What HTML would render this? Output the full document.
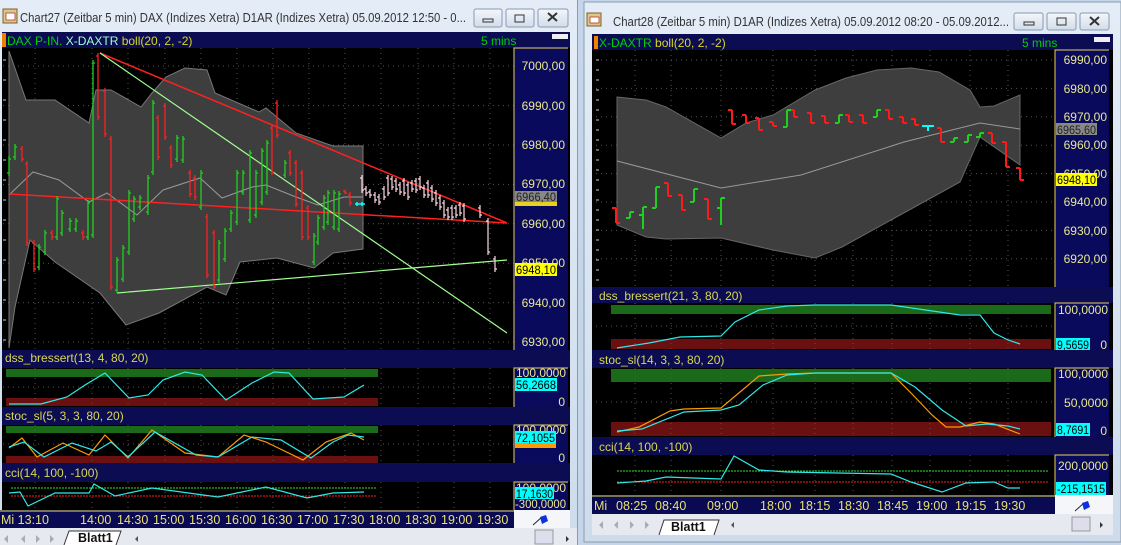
<!DOCTYPE html>
<html><head><meta charset="utf-8"><style>
html,body{margin:0;padding:0;width:1121px;height:545px;overflow:hidden;background:#c6d6ea}
svg{display:block;font-family:"Liberation Sans",sans-serif}
</style></head><body>
<svg width="1121" height="545" viewBox="0 0 1121 545" xmlns="http://www.w3.org/2000/svg">
<defs>
<linearGradient id="tb" x1="0" y1="0" x2="0" y2="1"><stop offset="0" stop-color="#e4edf7"/><stop offset="1" stop-color="#cddbeb"/></linearGradient>
<linearGradient id="btn" x1="0" y1="0" x2="0" y2="1"><stop offset="0" stop-color="#f4f7fb"/><stop offset="1" stop-color="#d2dcea"/></linearGradient>
</defs>
<!-- LEFT WINDOW -->
<rect x="0" y="0" width="578" height="545" fill="url(#tb)"/>
<rect x="577" y="0" width="1" height="545" fill="#8a9bb0"/>
<rect x="3" y="9" width="14" height="14" fill="#d8c890" stroke="#806020"/><rect x="6" y="13" width="9" height="7" fill="#fff" stroke="#c03030" stroke-width="0.8"/>
<text x="20" y="22" font-size="12.5" fill="#333" textLength="446" lengthAdjust="spacingAndGlyphs">Chart27 (Zeitbar 5 min)  DAX (Indizes Xetra) D1AR (Indizes Xetra) 05.09.2012 12:50 - 0...</text>
<g stroke="#8a9ab0" fill="url(#btn)"><rect x="474" y="9" width="28" height="18" rx="2"/><rect x="506" y="9" width="28" height="18" rx="2"/><rect x="538" y="9" width="30" height="18" rx="2"/></g>
<rect x="483" y="19" width="10" height="3" fill="none" stroke="#333"/><rect x="515" y="15" width="9" height="7" fill="none" stroke="#333"/>
<path d="M548 13l9 8M557 13l-9 8" stroke="#333" stroke-width="2"/>
<!-- content -->
<rect x="2" y="32" width="568" height="478" fill="#000"/>
<rect x="2" y="32" width="568" height="16" fill="#0c0c52"/>
<rect x="2" y="33" width="4" height="14" fill="#f08000"/>
<text x="7" y="45" font-size="12" fill="#00d000">DAX P-IN. <tspan fill="#a0ffd0">X-DAXTR</tspan> <tspan fill="#d8d820">boll(20, 2, -2)</tspan></text>
<text x="481" y="45" font-size="12" fill="#00d000">5 mins</text>
<rect x="552" y="34" width="16" height="5" fill="#eee"/>
<g stroke="#555" stroke-dasharray="1,4" stroke-width="1">
<path d="M3 66H514M3 105.6H514M3 145H514M3 184.4H514M3 223.8H514M3 263.2H514M3 302.6H514M3 342H514"/>
<path d="M35 48V350M92 48V350M128 48V350M165 48V350M201 48V350M237 48V350M273 48V350M309 48V350M345 48V350M381 48V350M418 48V350M454 48V350M490 48V350"/>
</g>
<path d="M9 51L26 100L55 100L89 123L96 90L111 90L141 107L152 93L166 77L185 68L207 70L215 93L259 112L266 108L296 133L333 146L363 146L363 249L333 253L314 268L277 258L240 262L226 295L207 287L159 313L126 325L100 293L55 262L30 240L15 307L9 348Z" fill="#3e3e3e" stroke="#777"/>
<path d="M9 195L33 172L59 180L89 202L107 193L137 215L163 190L200 178L222 198L252 187L266 185L296 197L318 205L344 197L363 197" fill="none" stroke="#999"/>
<path d="M100 53L507 223M9 194L507 223" stroke="#ff2020" stroke-width="1.5" fill="none"/>
<path d="M100 53L507 333M117 293L507 260" stroke="#a0ff90" stroke-width="1.2" fill="none"/>
<path stroke="#20d020" stroke-width="1.3" fill="none" d="M9 156V176M7 173h2M9 159h2M15 144V160M13 157h2M15 147h2M39 244V270M37 267h2M39 247h2M45 230V255M43 252h2M45 233h2M57 196V240M55 237h2M57 199h2M62 210V236M60 233h2M62 213h2M70 218V232M68 229h2M70 221h2M76 218V232M74 229h2M76 221h2M88 200V240M86 237h2M88 203h2M93 60V238M91 235h2M93 63h2M117 257V293M115 290h2M117 260h2M123 245V282M121 279h2M123 248h2M129 190V255M127 252h2M129 193h2M134 196V222M132 219h2M134 199h2M140 195V210M138 207h2M140 198h2M148 175V215M146 212h2M148 178h2M153 100V175M151 172h2M153 103h2M177 135V162M175 159h2M177 138h2M183 136V163M181 160h2M183 139h2M201 170V210M199 207h2M201 173h2M219 240V283M217 280h2M219 243h2M225 228V262M223 259h2M225 231h2M231 210V232M229 229h2M231 213h2M237 170V225M235 222h2M237 173h2M243 170V195M241 192h2M243 173h2M250 150V223M248 220h2M250 153h2M256 170V218M254 215h2M256 173h2M262 148V205M260 202h2M262 151h2M267 140V195M265 192h2M267 143h2M285 160V178M283 175h2M285 163h2M314 233V265M312 262h2M314 236h2M318 215V245M316 242h2M318 218h2M324 195V230M322 227h2M324 198h2M328 190V225M326 222h2M328 193h2M334 190V230M332 227h2M334 193h2M339 191V232M337 229h2M339 194h2"/>
<path stroke="#ff2020" stroke-width="1.3" fill="none" d="M22 146V162M20 149h2M22 159h2M27 161V246M25 164h2M27 243h2M34 240V272M32 243h2M34 269h2M52 230V240M50 233h2M52 237h2M83 230V240M81 233h2M83 237h2M98 53V120M96 56h2M98 117h2M105 88V137M103 91h2M105 134h2M111 136V290M109 139h2M111 287h2M158 115V160M156 118h2M158 157h2M165 103V140M163 106h2M165 137h2M171 145V168M169 148h2M171 165h2M190 170V197M188 173h2M190 194h2M195 175V200M193 178h2M195 197h2M207 214V278M205 217h2M207 275h2M214 230V290M212 233h2M214 287h2M272 125V175M270 128h2M272 172h2M277 100V138M275 103h2M277 135h2M290 150V176M288 153h2M290 173h2M296 160V207M294 163h2M296 204h2M302 170V240M300 173h2M302 237h2M308 205V240M306 208h2M308 237h2M345 190V194M343 191h2M345 193h2M350 192V206M348 195h2M350 203h2"/>
<path stroke="#00ffff" stroke-width="1.5" d="M355 204h10M357 202v4M362 202v4"/>
<path stroke="#ffd8e4" stroke-width="1.2" fill="none" d="M362 175V193M360 178h2M362 190h2M366 186V196M364 189h2M366 193h2M370 189V198M368 192h2M370 195h2M375 192V203M373 195h2M375 200h2M379 194V205M377 197h2M379 202h2M384 186V200M382 189h2M384 197h2M388 175V196M386 178h2M388 193h2M392 176V190M390 179h2M392 187h2M396 178V192M394 181h2M396 189h2M400 182V195M398 185h2M400 192h2M404 178V196M402 181h2M404 193h2M408 182V200M406 185h2M408 197h2M412 180V192M410 183h2M412 189h2M416 178V193M414 181h2M416 190h2M420 176V190M418 179h2M420 187h2M424 185V198M422 188h2M424 195h2M428 180V198M426 183h2M428 195h2M432 185V202M430 188h2M432 199h2M436 190V206M434 193h2M436 203h2M440 195V210M438 198h2M440 207h2M444 200V218M442 203h2M444 215h2M448 207V220M446 210h2M448 217h2M452 205V220M450 208h2M452 217h2M456 205V218M454 208h2M456 215h2M460 202V216M458 205h2M460 213h2M464 203V222M462 206h2M464 219h2M480 205V218M478 208h2M480 215h2M488 218V255M486 221h2M488 252h2M495 256V272M493 259h2M495 269h2"/>
<path d="M3 60h3M3 80h3M3 100h3M3 120h3M3 140h3M3 160h3M3 180h3M3 200h3M3 220h3M3 240h3M3 260h3M3 280h3M3 300h3M3 320h3M3 340h3" stroke="#ccc"/>
<rect x="514" y="48" width="54" height="302" fill="#0a0a5c"/>
<path d="M514 350V48H568" stroke="#e8d060" fill="none"/>
<g font-size="12" fill="#e8e890" text-anchor="end">
<text x="565" y="70">7000,00</text><text x="565" y="110">6990,00</text><text x="565" y="149">6980,00</text><text x="565" y="188">6970,00</text><text x="565" y="228">6960,00</text><text x="565" y="267">6950,00</text><text x="565" y="307">6940,00</text><text x="565" y="346">6930,00</text>
</g>
<rect x="515" y="194" width="42" height="12" fill="#e8d020"/>
<rect x="515" y="191" width="42" height="11" fill="#888"/><text x="516" y="201" font-size="12" fill="#222" textLength="40" lengthAdjust="spacingAndGlyphs">6966,40</text>
<rect x="515" y="263" width="42" height="13" fill="#ffff00"/><text x="516" y="274" font-size="12" fill="#000" textLength="40" lengthAdjust="spacingAndGlyphs">6948,10</text>
<!-- dss left -->
<rect x="2" y="350" width="568" height="18" fill="#0c0c52"/>
<text x="5" y="362" font-size="12" fill="#d8d850">dss_bressert(13, 4, 80, 20)</text>
<rect x="6" y="369" width="372" height="8" fill="#1a6a1a"/><rect x="6" y="398" width="372" height="8" fill="#6a1010"/>
<g stroke="#555" stroke-dasharray="1,4"><path d="M35 368V407M92 368V407M128 368V407M165 368V407M201 368V407M237 368V407M273 368V407M309 368V407M345 368V407M381 368V407M418 368V407M454 368V407M490 368V407M3 387H514"/></g>
<path d="M9 404L41 404L67 397L85 385L105 373L129 398L148 395L163 380L185 372L202 375L226 400L252 383L274 372L289 373L313 399L344 397L364 385" stroke="#30e8e8" fill="none" stroke-width="1.2"/>
<rect x="514" y="368" width="54" height="39" fill="#0a0a5c"/><path d="M514 407V368H568" stroke="#e8d060" fill="none"/>
<text x="566" y="377" font-size="12" fill="#e8e890" text-anchor="end" textLength="50" lengthAdjust="spacingAndGlyphs">100,0000</text>
<rect x="515" y="378" width="42" height="13" fill="#00ffff"/><text x="516" y="389" font-size="12" fill="#000" textLength="40" lengthAdjust="spacingAndGlyphs">56,2668</text>
<text x="565" y="406" font-size="12" fill="#e8e890" text-anchor="end">0</text>
<!-- stoc left -->
<rect x="2" y="407" width="568" height="18" fill="#0c0c52"/>
<text x="5" y="420" font-size="12" fill="#d8d850">stoc_sl(5, 3, 3, 80, 20)</text>
<rect x="6" y="426" width="372" height="7" fill="#1a6a1a"/><rect x="6" y="456" width="372" height="7" fill="#6a1010"/>
<g stroke="#555" stroke-dasharray="1,4"><path d="M35 425V463M92 425V463M128 425V463M165 425V463M201 425V463M237 425V463M273 425V463M309 425V463M345 425V463M381 425V463M418 425V463M454 425V463M490 425V463M3 444H514"/></g>
<path d="M9 448L22 438L37 457L63 443L89 455L105 435L128 458L152 430L185 453L218 457L244 435L266 442L303 460L326 442L351 433L364 440" stroke="#ff9a00" fill="none" stroke-width="1.2"/>
<path d="M9 447L24 442L44 457L72 443L96 451L111 442L128 457L155 432L196 455L218 457L252 437L281 440L311 458L333 442L348 435L364 437" stroke="#30e8e8" fill="none" stroke-width="1.2"/>
<rect x="514" y="425" width="54" height="38" fill="#0a0a5c"/><path d="M514 463V425H568" stroke="#e8d060" fill="none"/>
<text x="566" y="434" font-size="12" fill="#e8e890" text-anchor="end" textLength="50" lengthAdjust="spacingAndGlyphs">100,0000</text>
<rect x="515" y="441" width="41" height="7" fill="#ff9a00"/>
<rect x="515" y="431" width="41" height="12" fill="#00ffff"/><text x="516" y="442" font-size="12" fill="#000" textLength="39" lengthAdjust="spacingAndGlyphs">72,1055</text>
<text x="565" y="462" font-size="12" fill="#e8e890" text-anchor="end">0</text>
<!-- cci left -->
<rect x="2" y="463" width="568" height="19" fill="#0c0c52"/>
<text x="5" y="477" font-size="12" fill="#d8d850">cci(14, 100, -100)</text>
<g stroke="#555" stroke-dasharray="1,4"><path d="M35 482V509M92 482V509M128 482V509M165 482V509M201 482V509M237 482V509M273 482V509M309 482V509M345 482V509M381 482V509M418 482V509M454 482V509M490 482V509"/></g>
<path d="M11 488H377" stroke="#30e030" stroke-dasharray="2,1"/><path d="M11 496H377" stroke="#ff2020" stroke-dasharray="2,1"/>
<path d="M9 493L20 492L28 506L55 493L89 493L94 484L115 496L152 488L218 497L266 487L307 498L333 493L364 492" stroke="#30e8e8" fill="none" stroke-width="1.2"/>
<rect x="514" y="482" width="54" height="28" fill="#0a0a5c"/><path d="M514 510V482H568" stroke="#e8d060" fill="none"/>
<text x="566" y="492" font-size="12" fill="#e8e890" text-anchor="end" textLength="50" lengthAdjust="spacingAndGlyphs">100,0000</text>
<text x="566" y="508" font-size="12" fill="#e8e890" text-anchor="end" textLength="51" lengthAdjust="spacingAndGlyphs">-300,0000</text>
<rect x="515" y="487" width="39" height="12" fill="#00ffff"/><text x="516" y="498" font-size="12" fill="#000" textLength="37" lengthAdjust="spacingAndGlyphs">17,1630</text>
<rect x="0" y="510" width="514" height="18" fill="#0a0a52"/>
<path d="M0 511H514" stroke="#e8e060"/>
<rect x="514" y="510" width="56" height="18" fill="#f4f6fa"/>
<path d="M533 525l9-8" stroke="#223"/><path d="M540 517l6-2 2 6-6 3z" fill="#1030e0"/>
<g font-size="12.5" fill="#e8e070"><text x="1" y="524">Mi  13:10</text><text x="80" y="524">14:00</text><text x="117" y="524">14:30</text><text x="153" y="524">15:00</text><text x="189" y="524">15:30</text><text x="225" y="524">16:00</text><text x="261" y="524">16:30</text><text x="297" y="524">17:00</text><text x="333" y="524">17:30</text><text x="369" y="524">18:00</text><text x="405" y="524">18:30</text><text x="441" y="524">19:00</text><text x="477" y="524">19:30</text></g>
<rect x="0" y="528" width="577" height="17" fill="#e6eaf0"/>
<g fill="#aab"><path d="M8 535l-4 4 4 4zM25 535l-4 4 4 4zM36 535l4 4-4 4zM50 535l4 4-4 4z"/></g>
<path d="M64 545l5-14h52l-5 14" fill="#fff" stroke="#333"/>
<text x="78" y="542" font-size="12.5" font-weight="bold" fill="#111">Blatt1</text>
<path d="M138 536l-3 3 3 3" fill="#555"/>
<rect x="535" y="530" width="18" height="14" fill="#dde" stroke="#999"/><path d="M566 536l3 3-3 3z" fill="#333"/>

<!-- RIGHT WINDOW -->
<rect x="584" y="2" width="537" height="540" fill="url(#tb)" stroke="#8a9bb0"/>
<rect x="587" y="13" width="14" height="13" fill="#d8c890" stroke="#806020"/><rect x="590" y="17" width="9" height="6" fill="#fff" stroke="#c03030" stroke-width="0.8"/>
<text x="613" y="26" font-size="12.5" fill="#333" textLength="396" lengthAdjust="spacingAndGlyphs">Chart28 (Zeitbar 5 min)  D1AR (Indizes Xetra) 05.09.2012 08:20 - 05.09.2012...</text>
<g stroke="#8a9ab0" fill="url(#btn)"><rect x="1014" y="13" width="29" height="17" rx="2"/><rect x="1047" y="13" width="29" height="17" rx="2"/><rect x="1080" y="13" width="29" height="17" rx="2"/></g>
<rect x="1024" y="22" width="10" height="3" fill="none" stroke="#333"/><rect x="1057" y="18" width="9" height="7" fill="none" stroke="#333"/>
<path d="M1090 17l9 8M1099 17l-9 8" stroke="#333" stroke-width="2"/>
<rect x="592" y="34" width="521" height="462" fill="#000"/>
<rect x="592" y="34" width="521" height="16" fill="#0c0c52"/>
<rect x="594" y="36" width="4" height="13" fill="#f08000"/>
<text x="599" y="47" font-size="12" fill="#00d000">X-DAXTR <tspan fill="#d8d820">boll(20, 2, -2)</tspan></text>
<text x="1022" y="47" font-size="12" fill="#00d000">5 mins</text>
<rect x="1094" y="37" width="16" height="5" fill="#eee"/>
<g stroke="#555" stroke-dasharray="1,4">
<path d="M596 60H1055M596 88.4H1055M596 116.8H1055M596 145.2H1055M596 173.6H1055M596 202H1055M596 230.4H1055M596 258.8H1055"/>
<path d="M635 50V287M671 50V287M721 50V287M773 50V287M815 50V287M853 50V287M892 50V287M930 50V287M970 50V287M1008 50V287"/>
</g>
<path d="M617 97L646 100L666 107L721 138L746 123L773 115L815 90L846 78L877 70L911 68L939 72L970 90L980 107L994 106L1020 95L1020 165L980 137L960 182L891 220L842 247L815 258L773 250L721 238L666 239L646 237L617 225Z" fill="#3e3e3e" stroke="#666"/>
<path d="M617 161L721 188L801 175L904 142L980 123L1020 129" fill="none" stroke="#999"/>
<path stroke="#ff1a1a" stroke-width="2" fill="none" d="M616 208V223M612 208h4M616 223h4M668 183V196M664 183h4M668 196h4M682 195V210M678 195h4M682 210h4M708 199V219M704 199h4M708 219h4M732 110V124M728 110h4M732 124h4M746 115V123M742 115h4M746 123h4M759 118V130M755 118h4M759 130h4M773 122V126M769 122h4M773 126h4M794 110V117M790 110h4M794 117h4M811 113V123M807 113h4M811 123h4M825 116V123M821 116h4M825 123h4M849 115V122M845 115h4M849 122h4M863 115V123M859 115h4M863 123h4M889 110V119M885 110h4M889 119h4M903 117V123M899 117h4M903 123h4M915 119V125M911 119h4M915 125h4M941 128V142M937 128h4M941 142h4M992 133V143M988 133h4M992 143h4M1006 142V167M1002 142h4M1006 167h4M1020 168V180M1016 168h4M1020 180h4"/>
<path stroke="#20d020" stroke-width="2" fill="none" d="M630 212V218M626 218h4M630 212h4M643 207V229M639 215h4M643 207h4M656 187V208M652 208h4M656 187h4M694 189V202M690 202h4M694 189h4M721 198V225M717 208h4M721 198h4M787 110V127M783 127h4M787 110h4M839 115V123M835 123h4M839 115h4M877 110V117M873 117h4M877 110h4M954 138V142M950 142h4M954 138h4M968 135V142M964 142h4M968 135h4M980 133V137M976 137h4M980 133h4"/>
<path stroke="#00ffff" stroke-width="2" d="M922 126h12M928 126v5"/>
<path d="M596 60h3M596 70h3M596 80h3M596 90h3M596 100h3M596 110h3M596 120h3M596 130h3M596 140h3M596 150h3M596 160h3M596 170h3M596 180h3M596 190h3M596 200h3M596 210h3M596 220h3M596 230h3M596 240h3M596 250h3M596 260h3M596 270h3M596 280h3" stroke="#ccc"/>
<rect x="1055" y="50" width="54" height="237" fill="#0a0a5c"/>
<path d="M1055 287V50H1109" stroke="#e8d060" fill="none"/>
<g font-size="12" fill="#e8e890" text-anchor="end">
<text x="1107" y="64">6990,00</text><text x="1107" y="93">6980,00</text><text x="1107" y="121">6970,00</text><text x="1107" y="149">6960,00</text><text x="1107" y="178">6950,00</text><text x="1107" y="206">6940,00</text><text x="1107" y="235">6930,00</text><text x="1107" y="263">6920,00</text>
</g>
<rect x="1056" y="123" width="41" height="12" fill="#888"/><text x="1057" y="134" font-size="12" fill="#222" textLength="39" lengthAdjust="spacingAndGlyphs">6965,60</text>
<rect x="1056" y="173" width="41" height="13" fill="#ffff00"/><text x="1057" y="184" font-size="12" fill="#000" textLength="39" lengthAdjust="spacingAndGlyphs">6948,10</text>
<!-- dss right -->
<rect x="592" y="287" width="521" height="16" fill="#0c0c52"/>
<text x="599" y="300" font-size="12" fill="#d8d850">dss_bressert(21, 3, 80, 20)</text>
<rect x="611" y="305" width="440" height="9" fill="#1a6a1a"/><rect x="611" y="339" width="440" height="10" fill="#6a1010"/>
<g stroke="#555" stroke-dasharray="1,4"><path d="M635 303V350M671 303V350M721 303V350M773 303V350M815 303V350M853 303V350M892 303V350M930 303V350M970 303V350M1008 303V350M596 326H1055"/></g>
<path d="M617 348L649 343L680 337L721 336L735 322L759 310L787 306L815 305L891 305L960 315L980 315L994 333L1008 340L1020 344" stroke="#30e8e8" fill="none" stroke-width="1.2"/>
<rect x="1055" y="303" width="54" height="47" fill="#0a0a5c"/><path d="M1055 350V303H1109" stroke="#e8d060" fill="none"/>
<text x="1108" y="314" font-size="12" fill="#e8e890" text-anchor="end" textLength="50" lengthAdjust="spacingAndGlyphs">100,0000</text>
<rect x="1056" y="338" width="34" height="13" fill="#00ffff"/><text x="1057" y="349" font-size="12" fill="#000" textLength="32" lengthAdjust="spacingAndGlyphs">9,5659</text>
<text x="1107" y="349" font-size="12" fill="#e8e890" text-anchor="end">0</text>
<!-- stoc right -->
<rect x="592" y="350" width="521" height="18" fill="#0c0c52"/>
<text x="599" y="364" font-size="12" fill="#d8d850">stoc_sl(14, 3, 3, 80, 20)</text>
<rect x="611" y="369" width="440" height="13" fill="#1a6a1a"/><rect x="611" y="422" width="440" height="14" fill="#6a1010"/>
<g stroke="#555" stroke-dasharray="1,4"><path d="M635 368V436M671 368V436M721 368V436M773 368V436M815 368V436M853 368V436M892 368V436M930 368V436M970 368V436M1008 368V436M596 402H1055"/></g>
<path d="M617 432L639 427L670 411L684 409L721 408L759 376L787 374L815 373L891 373L911 393L932 415L946 427L960 427L980 422L994 424L1020 434" stroke="#ff9a00" fill="none" stroke-width="1.2"/>
<path d="M617 431L642 429L684 412L721 410L739 405L763 385L787 375L815 373L891 373L915 387L942 410L966 426L987 424L1008 426L1020 429" stroke="#30e8e8" fill="none" stroke-width="1.2"/>
<rect x="1055" y="368" width="54" height="69" fill="#0a0a5c"/><path d="M1055 437V368H1109" stroke="#e8d060" fill="none"/>
<text x="1108" y="378" font-size="12" fill="#e8e890" text-anchor="end" textLength="50" lengthAdjust="spacingAndGlyphs">100,0000</text>
<text x="1108" y="407" font-size="12" fill="#e8e890" text-anchor="end" textLength="44" lengthAdjust="spacingAndGlyphs">50,0000</text>
<rect x="1056" y="423" width="34" height="13" fill="#00ffff"/><text x="1057" y="434" font-size="12" fill="#000" textLength="32" lengthAdjust="spacingAndGlyphs">8,7691</text>
<text x="1107" y="435" font-size="12" fill="#e8e890" text-anchor="end">0</text>
<!-- cci right -->
<rect x="592" y="437" width="521" height="18" fill="#0c0c52"/>
<text x="599" y="451" font-size="12" fill="#d8d850">cci(14, 100, -100)</text>
<g stroke="#555" stroke-dasharray="1,4"><path d="M635 455V495M671 455V495M721 455V495M773 455V495M815 455V495M853 455V495M892 455V495M930 455V495M970 455V495M1008 455V495"/></g>
<path d="M617 471H1048" stroke="#30e030" stroke-dasharray="2,1"/><path d="M617 482H1048" stroke="#ff2020" stroke-dasharray="2,1"/>
<path d="M617 483L646 481L666 477L721 479L734 456L759 470L787 472L891 474L911 482L942 492L966 483L994 482L1008 488L1020 488" stroke="#30e8e8" fill="none" stroke-width="1.2"/>
<rect x="1055" y="455" width="54" height="40" fill="#0a0a5c"/><path d="M1055 495V455H1109" stroke="#e8d060" fill="none"/>
<text x="1108" y="470" font-size="12" fill="#e8e890" text-anchor="end" textLength="50" lengthAdjust="spacingAndGlyphs">200,0000</text>
<rect x="1056" y="482" width="50" height="13" fill="#00ffff"/><text x="1057" y="493" font-size="12" fill="#000" textLength="48" lengthAdjust="spacingAndGlyphs">-215,1515</text>
<rect x="592" y="495" width="463" height="19" fill="#0a0a52"/>
<path d="M592 496H1055" stroke="#e8e060"/>
<rect x="1055" y="495" width="58" height="19" fill="#f4f6fa"/>
<path d="M1075 511l9-8" stroke="#223"/><path d="M1082 503l6-2 2 6-6 3z" fill="#1030e0"/>
<g font-size="12.5" fill="#e8e070"><text x="594" y="510">Mi</text><text x="616" y="510">08:25</text><text x="655" y="510">08:40</text><text x="707" y="510">09:00</text><text x="760" y="510">18:00</text><text x="799" y="510">18:15</text><text x="838" y="510">18:30</text><text x="877" y="510">18:45</text><text x="916" y="510">19:00</text><text x="955" y="510">19:15</text><text x="994" y="510">19:30</text></g>
<rect x="592" y="514" width="521" height="21" fill="#e6eaf0"/>
<g fill="#aab"><path d="M603 521l-4 4 4 4zM618 521l-4 4 4 4zM630 521l4 4-4 4zM645 521l4 4-4 4z"/></g>
<path d="M659 535l5-15h55l-5 15" fill="#fff" stroke="#333"/>
<text x="671" y="531" font-size="12.5" font-weight="bold" fill="#111">Blatt1</text>
<path d="M734 522l-3 3 3 3" fill="#555"/>
<rect x="1072" y="517" width="18" height="14" fill="#dde" stroke="#999"/><path d="M1100 522l3 3-3 3z" fill="#333"/>
</svg>
</body></html>
